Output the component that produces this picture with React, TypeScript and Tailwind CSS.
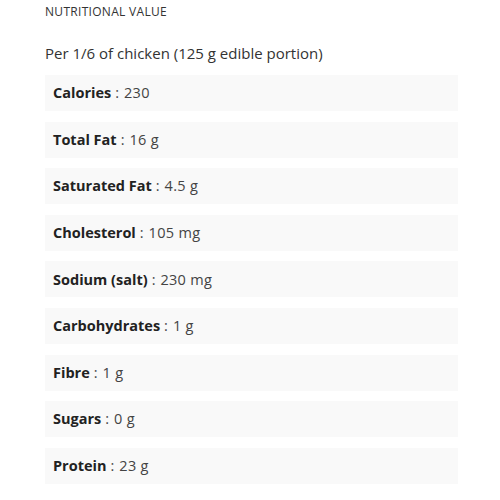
import React from 'react';

const rows: [string, string][] = [
  ['Calories', '230'],
  ['Total Fat', '16 g'],
  ['Saturated Fat', '4.5 g'],
  ['Cholesterol', '105 mg'],
  ['Sodium (salt)', '230 mg'],
  ['Carbohydrates', '1 g'],
  ['Fibre', '1 g'],
  ['Sugars', '0 g'],
  ['Protein', '23 g'],
];

export default function App() {
  return (
    <div className="min-h-[500px] w-[500px] bg-white font-['Open_Sans',sans-serif] text-[#222]">
      <div className="pl-[45px] w-[458px]">
        <h2 className="h-[24px] text-[12px] leading-[24px] font-medium text-[#333] tracking-[0.3px]">
          NUTRITIONAL VALUE
        </h2>
        <p className="mt-[17px] h-[24px] text-[15px] leading-[24px] text-[#333]">
          Per 1/6 of chicken (125 g edible portion)
        </p>
        <div className="mt-[10px] flex flex-col gap-[10.6px]">
          {rows.map(([label, value]) => (
            <div key={label} className="h-[36px] flex items-center pl-[8px] bg-[#f9f9f9] text-[14.5px]">
              <span className="font-bold">{label}</span>
              <span className="ml-[4px] text-[#444]">:</span>
              <span className="ml-[5px] text-[#444] tracking-[0.3px]">{value}</span>
            </div>
          ))}
        </div>
      </div>
    </div>
  );
}
